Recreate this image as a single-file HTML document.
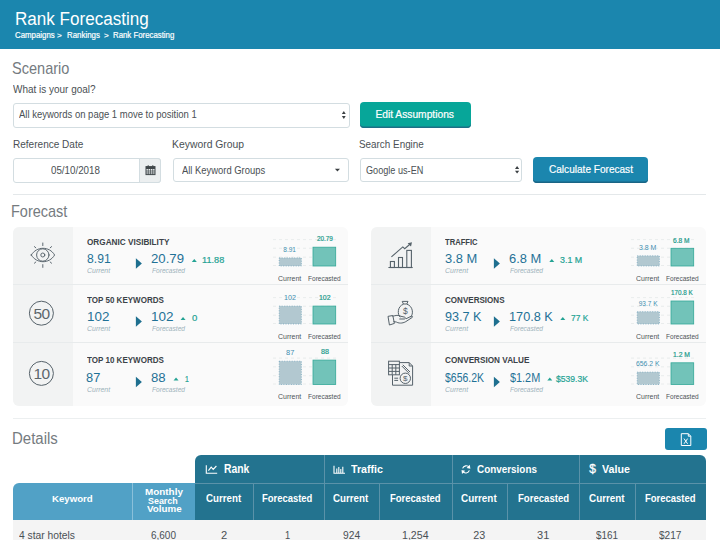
<!DOCTYPE html>
<html><head><meta charset="utf-8"><style>
html,body{margin:0;padding:0;background:#fff;width:720px;height:540px;overflow:hidden;position:relative}
body>div{position:absolute}
.t{position:absolute;font-family:"Liberation Sans",sans-serif;line-height:1;white-space:pre;transform-origin:0 0}
</style></head><body>
<div style="left:0px;top:0px;width:720.00px;height:49.00px;background:#1b86ae"></div><div style="left:13px;top:103px;width:336.50px;height:24.50px;border:1px solid #d3dde1;border-radius:3px;background:#fff;box-sizing:border-box"></div><div style="left:360px;top:102.3px;width:110.75px;height:25.30px;background:#07a699;border-radius:4px;box-shadow:inset 0 -1.5px 0 #1d6f86"></div><div style="left:13px;top:158px;width:148.00px;height:24.50px;border:1px solid #d3dde1;border-radius:3px;background:#fff;box-sizing:border-box"></div><div style="left:139px;top:158px;width:22.00px;height:24.50px;border:1px solid #d3dde1;border-radius:0 3px 3px 0;background:#eceff0;box-sizing:border-box"></div><div style="left:172.5px;top:158px;width:176.50px;height:24.00px;border:1px solid #d3dde1;border-radius:3px;background:#fff;box-sizing:border-box"></div><div style="left:359.5px;top:158px;width:162.50px;height:24.00px;border:1px solid #d3dde1;border-radius:3px;background:#fff;box-sizing:border-box"></div><div style="left:533px;top:157px;width:114.80px;height:25.60px;background:#1b86ae;border-radius:4px;box-shadow:inset 0 -1.5px 0 #1a6585"></div><div style="left:13px;top:194px;width:693.00px;height:1.00px;background:#e4e8ea"></div><div style="left:13px;top:417.5px;width:693.00px;height:1.00px;background:#eceff0"></div><div style="left:13px;top:227px;width:335.00px;height:178.70px;background:#fafafa;border-radius:6px"></div><div style="left:13px;top:227px;width:60.00px;height:178.70px;background:#f2f3f3;border-radius:6px 0 0 6px"></div><div style="left:13px;top:284px;width:335.00px;height:1.00px;background:#e8ebec"></div><div style="left:13px;top:342px;width:335.00px;height:1.00px;background:#e8ebec"></div><div style="left:370.7px;top:227px;width:335.00px;height:178.70px;background:#fafafa;border-radius:6px"></div><div style="left:370.7px;top:227px;width:60.00px;height:178.70px;background:#f2f3f3;border-radius:6px 0 0 6px"></div><div style="left:370.7px;top:284px;width:335.00px;height:1.00px;background:#e8ebec"></div><div style="left:370.7px;top:342px;width:335.00px;height:1.00px;background:#e8ebec"></div><div style="left:665px;top:428px;width:42.00px;height:22.30px;background:#1b86ae;border-radius:3px"></div><div style="left:195px;top:455px;width:511.30px;height:65.00px;background:#23738f;border-radius:6px 6px 0 0"></div><div style="left:13px;top:483px;width:182.00px;height:37.00px;background:#51a1c6;border-radius:6px 0 0 0"></div><div style="left:195px;top:483px;width:511.30px;height:1.00px;background:#5a92a9"></div><div style="left:252.8px;top:483px;width:1.00px;height:37.00px;background:#5a92a9"></div><div style="left:323.6px;top:455px;width:1.00px;height:65.00px;background:#5a92a9"></div><div style="left:379.4px;top:483px;width:1.00px;height:37.00px;background:#5a92a9"></div><div style="left:451.7px;top:455px;width:1.00px;height:65.00px;background:#5a92a9"></div><div style="left:507.3px;top:483px;width:1.00px;height:37.00px;background:#5a92a9"></div><div style="left:578.5px;top:455px;width:1.00px;height:65.00px;background:#5a92a9"></div><div style="left:635.3px;top:483px;width:1.00px;height:37.00px;background:#5a92a9"></div><div style="left:132.2px;top:483px;width:1.00px;height:37.00px;background:#8ac0da"></div><div style="left:13px;top:520px;width:693.30px;height:20.00px;background:#f4f4f4"></div>
<svg width="720" height="540" style="position:absolute;left:0;top:0"><polygon points="135.9,258.3 141.9,263.5 135.9,268.7" fill="#1e6f8f"/><polygon points="191.8,261.9 194.3,258.9 196.8,261.9" fill="#24a394"/><line x1="273" y1="239.6" x2="339" y2="239.6" stroke="#e5e8e9" stroke-width="0.8" stroke-dasharray="3,3"/><line x1="273" y1="248.3" x2="339" y2="248.3" stroke="#e5e8e9" stroke-width="0.8" stroke-dasharray="3,3"/><line x1="273" y1="257.2" x2="339" y2="257.2" stroke="#e5e8e9" stroke-width="0.8" stroke-dasharray="3,3"/><line x1="273" y1="265.5" x2="339" y2="265.5" stroke="#e5e8e9" stroke-width="0.8" stroke-dasharray="3,3"/><rect x="279.2" y="257.9" width="22.2" height="8.100000000000023" fill="#b2c8d0" stroke="#6ea2ba" stroke-width="0.7" stroke-dasharray="1,1.5"/><rect x="313" y="247.2" width="22.7" height="18.80000000000001" fill="#72c3b9" stroke="#34a898" stroke-width="0.8"/><polygon points="135.9,316.3 141.9,321.5 135.9,326.7" fill="#1e6f8f"/><polygon points="180.55,319.9 183.05,316.9 185.55,319.9" fill="#24a394"/><line x1="273" y1="297.6" x2="339" y2="297.6" stroke="#e5e8e9" stroke-width="0.8" stroke-dasharray="3,3"/><line x1="273" y1="306.3" x2="339" y2="306.3" stroke="#e5e8e9" stroke-width="0.8" stroke-dasharray="3,3"/><line x1="273" y1="315.2" x2="339" y2="315.2" stroke="#e5e8e9" stroke-width="0.8" stroke-dasharray="3,3"/><line x1="273" y1="323.5" x2="339" y2="323.5" stroke="#e5e8e9" stroke-width="0.8" stroke-dasharray="3,3"/><rect x="279.2" y="306.1" width="22.2" height="17.899999999999977" fill="#b2c8d0" stroke="#6ea2ba" stroke-width="0.7" stroke-dasharray="1,1.5"/><rect x="313" y="306.1" width="22.7" height="17.899999999999977" fill="#72c3b9" stroke="#34a898" stroke-width="0.8"/><polygon points="135.9,376.8 141.9,382.0 135.9,387.2" fill="#1e6f8f"/><polygon points="173.55,380.4 176.05,377.4 178.55,380.4" fill="#24a394"/><line x1="273" y1="358.1" x2="339" y2="358.1" stroke="#e5e8e9" stroke-width="0.8" stroke-dasharray="3,3"/><line x1="273" y1="366.8" x2="339" y2="366.8" stroke="#e5e8e9" stroke-width="0.8" stroke-dasharray="3,3"/><line x1="273" y1="375.7" x2="339" y2="375.7" stroke="#e5e8e9" stroke-width="0.8" stroke-dasharray="3,3"/><line x1="273" y1="384.0" x2="339" y2="384.0" stroke="#e5e8e9" stroke-width="0.8" stroke-dasharray="3,3"/><rect x="279.2" y="361.2" width="22.2" height="23.30000000000001" fill="#b2c8d0" stroke="#6ea2ba" stroke-width="0.7" stroke-dasharray="1,1.5"/><rect x="313" y="360.1" width="22.7" height="24.399999999999977" fill="#72c3b9" stroke="#34a898" stroke-width="0.8"/><polygon points="493.9,258.3 499.9,263.5 493.9,268.7" fill="#1e6f8f"/><polygon points="549.3,261.9 551.8,258.9 554.3,261.9" fill="#24a394"/><line x1="631" y1="239.6" x2="697" y2="239.6" stroke="#e5e8e9" stroke-width="0.8" stroke-dasharray="3,3"/><line x1="631" y1="248.3" x2="697" y2="248.3" stroke="#e5e8e9" stroke-width="0.8" stroke-dasharray="3,3"/><line x1="631" y1="257.2" x2="697" y2="257.2" stroke="#e5e8e9" stroke-width="0.8" stroke-dasharray="3,3"/><line x1="631" y1="265.5" x2="697" y2="265.5" stroke="#e5e8e9" stroke-width="0.8" stroke-dasharray="3,3"/><rect x="637.2" y="255.8" width="22.2" height="10.199999999999989" fill="#b2c8d0" stroke="#6ea2ba" stroke-width="0.7" stroke-dasharray="1,1.5"/><rect x="671" y="248.3" width="22.7" height="17.69999999999999" fill="#72c3b9" stroke="#34a898" stroke-width="0.8"/><polygon points="493.9,316.3 499.9,321.5 493.9,326.7" fill="#1e6f8f"/><polygon points="560.3,319.9 562.8,316.9 565.3,319.9" fill="#24a394"/><line x1="631" y1="297.6" x2="697" y2="297.6" stroke="#e5e8e9" stroke-width="0.8" stroke-dasharray="3,3"/><line x1="631" y1="306.3" x2="697" y2="306.3" stroke="#e5e8e9" stroke-width="0.8" stroke-dasharray="3,3"/><line x1="631" y1="315.2" x2="697" y2="315.2" stroke="#e5e8e9" stroke-width="0.8" stroke-dasharray="3,3"/><line x1="631" y1="323.5" x2="697" y2="323.5" stroke="#e5e8e9" stroke-width="0.8" stroke-dasharray="3,3"/><rect x="637.2" y="311.7" width="22.2" height="12.300000000000011" fill="#b2c8d0" stroke="#6ea2ba" stroke-width="0.7" stroke-dasharray="1,1.5"/><rect x="671" y="301" width="22.7" height="23" fill="#72c3b9" stroke="#34a898" stroke-width="0.8"/><polygon points="493.9,376.8 499.9,382.0 493.9,387.2" fill="#1e6f8f"/><polygon points="547.3,380.4 549.8,377.4 552.3,380.4" fill="#24a394"/><line x1="631" y1="358.1" x2="697" y2="358.1" stroke="#e5e8e9" stroke-width="0.8" stroke-dasharray="3,3"/><line x1="631" y1="366.8" x2="697" y2="366.8" stroke="#e5e8e9" stroke-width="0.8" stroke-dasharray="3,3"/><line x1="631" y1="375.7" x2="697" y2="375.7" stroke="#e5e8e9" stroke-width="0.8" stroke-dasharray="3,3"/><line x1="631" y1="384.0" x2="697" y2="384.0" stroke="#e5e8e9" stroke-width="0.8" stroke-dasharray="3,3"/><rect x="637.2" y="372.1" width="22.2" height="12.399999999999977" fill="#b2c8d0" stroke="#6ea2ba" stroke-width="0.7" stroke-dasharray="1,1.5"/><rect x="671" y="362.8" width="22.7" height="21.69999999999999" fill="#72c3b9" stroke="#34a898" stroke-width="0.8"/><polygon points="341.9,113.9 343.8,111 345.7,113.9" fill="#3a3f42"/><polygon points="341.9,116.1 343.8,118.9 345.7,116.1" fill="#3a3f42"/><polygon points="515,168.9 517.1,166.1 519.2,168.9" fill="#3a3f42"/><polygon points="515,170.8 517.1,173.6 519.2,170.8" fill="#3a3f42"/><polygon points="334.9,168.75 340,168.75 337.45,171.5" fill="#3a3f42"/><rect x="146" y="166.6" width="9" height="8" fill="none" stroke="#41474a" stroke-width="1"/><rect x="146" y="166.6" width="9" height="2.4" fill="#41474a"/><path d="M148.2,165.2v2 M152.8,165.2v2" stroke="#41474a" stroke-width="1"/><path d="M146,171h9 M146,173h9 M148.3,169v6 M150.5,169v6 M152.7,169v6" stroke="#41474a" stroke-width="0.7"/><g fill="none" stroke="#56626a" stroke-width="0.95" stroke-linecap="round"><path d="M31.3,255 C36.5,246 49.4,246 54.6,255 C49.4,264 36.5,264 31.3,255 Z"/><circle cx="42.8" cy="255" r="6.2"/><circle cx="42.8" cy="255" r="2"/><path d="M42.8,243v2.6 M42.8,264.6v2.8 M34.4,246.6l1.4,1.2 M51.6,246.6l-1.4,1.2 M34.4,263.2l1.4,-1.2 M51.6,263.2l-1.4,-1.2"/></g><circle cx="41.4" cy="313.2" r="12" fill="none" stroke="#56626a" stroke-width="1"/><text x="41.4" y="318.5" text-anchor="middle" font-family="Liberation Sans" font-size="15.5" fill="#5c666b" letter-spacing="-0.6">50</text><circle cx="41.4" cy="373.4" r="12" fill="none" stroke="#56626a" stroke-width="1"/><text x="41.4" y="378.7" text-anchor="middle" font-family="Liberation Sans" font-size="15.5" fill="#5c666b" letter-spacing="-0.6">10</text><g fill="none" stroke="#56626a" stroke-width="1.1"><path d="M388.4,267.5H412.7"/><rect x="390.4" y="261.5" width="4" height="6"/><rect x="398.5" y="257.5" width="4" height="10"/><rect x="406.8" y="250.4" width="4.6" height="17.1"/><path d="M391.4,256.9L402.8,246.9L404.7,248.7L410.2,244"/></g><polygon points="407.6,243.2 412,242.2 411,246.4" fill="#56626a"/><g fill="none" stroke="#56626a" stroke-width="1" stroke-linejoin="round" stroke-linecap="round"><path d="M402.6,301.4h5.4l-1.2,2.6h-3z"/><path d="M403.2,304.3C397.5,306 397,314.5 400,317 M407.2,304.3C413,306 413.8,314 410.8,317"/><path d="M388.4,316.3l4.4,-0.8l1.6,7.9l-4.6,1.5z"/><path d="M392.8,316.2C396,315.5 398,314.6 401,316.3l3.8,0.9c1,0.4 0.8,1.8 -0.3,1.8h-4.8"/><path d="M393.9,321.6l2.6,0.5C400,324 404,322.8 406,321.5l6.3,-4.1c0.6,-0.6 0,-1.6 -0.9,-1.3l-5,2.5"/></g><text x="405.3" y="314" text-anchor="middle" font-family="Liberation Sans" font-size="8.5" fill="#56626a">$</text><g fill="none" stroke="#56626a" stroke-width="1"><path d="M399.6,362.6H409.2L412.6,366V385.2H392.5V375"/><path d="M409.2,362.6V366H412.6"/><rect x="388.6" y="361.2" width="10.8" height="13.6"/><path d="M388.6,364.6h10.8 M392.2,364.6v10.2 M395.8,364.6v10.2 M388.6,368h10.8 M388.6,371.4h10.8"/><circle cx="405.3" cy="378.3" r="5.2"/><path d="M402.8,364.8l7.2,7.2 M401.8,366l7.4,7.4"/><path d="M394.3,378.2h3.8 M394.3,380.4h3.8"/></g><text x="405.3" y="381.2" text-anchor="middle" font-family="Liberation Sans" font-size="8" fill="#56626a">$</text><g fill="none" stroke="#ffffff" stroke-width="1.1"><path d="M206.3,465.2V473.2H217.2"/><path d="M208.4,470.6L211.2,467.2L213.2,469.4L216.4,466"/><path d="M334,465.8V473.2H345"/><path d="M336.8,473v-4.5 M338.8,473v-6 M340.8,473v-4 M342.8,473v-6.2"/><path d="M462.6,468.4A3.9,3.9 0 0 1 469.3,467.2 M469.4,470.4A3.9,3.9 0 0 1 462.6,471.4"/></g><polygon points="469.8,464.8 470.4,468.8 466.6,468" fill="#fff"/><polygon points="462.0,474 461.5,470 465.2,470.8" fill="#fff"/><text x="592.5" y="473.2" text-anchor="middle" font-family="Liberation Sans" font-size="12" fill="#fff" stroke="#fff" stroke-width="0.3">$</text><g fill="none" stroke="#ffffff" stroke-width="1"><path d="M681.3,433.7H688.3L690.8,436.2V445.5H681.3Z"/><path d="M688.3,433.7V436.2H690.8"/><path d="M684,438.6l3.6,5.2 M687.6,438.6l-3.6,5.2"/></g></svg>
<div class="t" style="left:14.71px;top:10.00px;font-size:18.0px;color:#ffffff;transform:scaleX(0.948)">Rank Forecasting</div>
<div class="t" style="left:14.70px;top:31.00px;font-size:8.75px;color:#ffffff;-webkit-text-stroke:0.2px currentColor;transform:scaleX(0.896)">Campaigns</div>
<div class="t" style="left:57.22px;top:32.00px;font-size:8.0px;color:#ffffff;-webkit-text-stroke:0.2px currentColor;transform:scaleX(1.030)">&gt;</div>
<div class="t" style="left:67.28px;top:31.00px;font-size:8.75px;color:#ffffff;-webkit-text-stroke:0.2px currentColor;transform:scaleX(0.900)">Rankings</div>
<div class="t" style="left:103.83px;top:32.00px;font-size:8.0px;color:#ffffff;-webkit-text-stroke:0.2px currentColor;transform:scaleX(1.023)">&gt;</div>
<div class="t" style="left:113.27px;top:31.00px;font-size:8.75px;color:#ffffff;-webkit-text-stroke:0.2px currentColor;transform:scaleX(0.894)">Rank Forecasting</div>
<div class="t" style="left:11.76px;top:60.00px;font-size:17.0px;color:#757b7f;transform:scaleX(0.855)">Scenario</div>
<div class="t" style="left:12.98px;top:84.00px;font-size:10.5px;color:#4a5054;transform:scaleX(0.950)">What is your goal?</div>
<div class="t" style="left:18.94px;top:110.00px;font-size:10.25px;color:#4a5054;transform:scaleX(0.926)">All keywords on page 1 move to position 1</div>
<div class="t" style="left:375.39px;top:110.00px;font-size:10.25px;color:#ffffff;-webkit-text-stroke:0.2px currentColor">Edit Assumptions</div>
<div class="t" style="left:12.70px;top:139.00px;font-size:10.75px;color:#4a5054;transform:scaleX(0.934)">Reference Date</div>
<div class="t" style="left:171.64px;top:139.00px;font-size:10.75px;color:#4a5054;transform:scaleX(0.966)">Keyword Group</div>
<div class="t" style="left:358.93px;top:139.00px;font-size:10.75px;color:#4a5054;transform:scaleX(0.919)">Search Engine</div>
<div class="t" style="left:51.48px;top:165.00px;font-size:10.75px;color:#4a5054;transform:scaleX(0.909)">05/10/2018</div>
<div class="t" style="left:181.73px;top:166.00px;font-size:10.0px;color:#4a5054;transform:scaleX(0.941)">All Keyword Groups</div>
<div class="t" style="left:365.99px;top:165.00px;font-size:11.25px;color:#4a5054;transform:scaleX(0.811)">Google us-EN</div>
<div class="t" style="left:548.52px;top:164.00px;font-size:11.25px;color:#ffffff;-webkit-text-stroke:0.2px currentColor;transform:scaleX(0.895)">Calculate Forecast</div>
<div class="t" style="left:11.29px;top:204.00px;font-size:15.75px;color:#757b7f;transform:scaleX(0.920)">Forecast</div>
<div class="t" style="left:12.17px;top:431.00px;font-size:16.0px;color:#757b7f;transform:scaleX(0.937)">Details</div>
<div class="t" style="left:86.62px;top:238.00px;font-size:8.75px;color:#3b4348;font-weight:700;transform:scaleX(0.936)">ORGANIC VISIBILITY</div>
<div class="t" style="left:86.52px;top:252.00px;font-size:13.25px;color:#1f7196;transform:scaleX(0.917)">8.91</div>
<div class="t" style="left:86.64px;top:267.00px;font-size:7.5px;color:#9db2bb;font-style:italic;transform:scaleX(0.926)">Current</div>
<div class="t" style="left:151.11px;top:252.00px;font-size:13.25px;color:#1f7196;transform:scaleX(0.994)">20.79</div>
<div class="t" style="left:151.60px;top:267.00px;font-size:7.5px;color:#9db2bb;font-style:italic;transform:scaleX(0.879)">Forecasted</div>
<div class="t" style="left:201.78px;top:256.00px;font-size:9.0px;color:#24a394;-webkit-text-stroke:0.2px currentColor;transform:scaleX(1.020)">11.88</div>
<div class="t" style="left:283.30px;top:247.00px;font-size:6.5px;color:#3f8fb0">8.91</div>
<div class="t" style="left:316.69px;top:236.00px;font-size:6.5px;color:#1e9b8c;-webkit-text-stroke:0.2px currentColor;transform:scaleX(0.978)">20.79</div>
<div class="t" style="left:278.45px;top:275.00px;font-size:7.0px;color:#4e5559;transform:scaleX(0.995)">Current</div>
<div class="t" style="left:307.54px;top:275.00px;font-size:7.0px;color:#4e5559;transform:scaleX(0.934)">Forecasted</div>
<div class="t" style="left:87.44px;top:296.00px;font-size:8.75px;color:#3b4348;font-weight:700;transform:scaleX(0.917)">TOP 50 KEYWORDS</div>
<div class="t" style="left:86.94px;top:310.00px;font-size:13.25px;color:#1f7196;transform:scaleX(1.011)">102</div>
<div class="t" style="left:86.64px;top:325.00px;font-size:7.5px;color:#9db2bb;font-style:italic;transform:scaleX(0.926)">Current</div>
<div class="t" style="left:150.75px;top:310.00px;font-size:13.25px;color:#1f7196;transform:scaleX(1.018)">102</div>
<div class="t" style="left:151.60px;top:325.00px;font-size:7.5px;color:#9db2bb;font-style:italic;transform:scaleX(0.879)">Forecasted</div>
<div class="t" style="left:191.73px;top:314.00px;font-size:9.0px;color:#24a394;-webkit-text-stroke:0.2px currentColor;transform:scaleX(1.058)">0</div>
<div class="t" style="left:284.16px;top:295.00px;font-size:6.5px;color:#3f8fb0;transform:scaleX(1.104)">102</div>
<div class="t" style="left:318.64px;top:295.00px;font-size:6.5px;color:#1e9b8c;-webkit-text-stroke:0.2px currentColor;transform:scaleX(1.061)">102</div>
<div class="t" style="left:278.45px;top:333.00px;font-size:7.0px;color:#4e5559;transform:scaleX(0.995)">Current</div>
<div class="t" style="left:307.54px;top:333.00px;font-size:7.0px;color:#4e5559;transform:scaleX(0.934)">Forecasted</div>
<div class="t" style="left:87.44px;top:356.00px;font-size:8.75px;color:#3b4348;font-weight:700;transform:scaleX(0.917)">TOP 10 KEYWORDS</div>
<div class="t" style="left:86.47px;top:371.00px;font-size:13.25px;color:#1f7196;transform:scaleX(0.968)">87</div>
<div class="t" style="left:86.64px;top:386.00px;font-size:7.5px;color:#9db2bb;font-style:italic;transform:scaleX(0.926)">Current</div>
<div class="t" style="left:151.24px;top:371.00px;font-size:13.25px;color:#1f7196;transform:scaleX(0.994)">88</div>
<div class="t" style="left:151.60px;top:386.00px;font-size:7.5px;color:#9db2bb;font-style:italic;transform:scaleX(0.879)">Forecasted</div>
<div class="t" style="left:184.57px;top:375.00px;font-size:9.0px;color:#24a394;-webkit-text-stroke:0.2px currentColor;transform:scaleX(0.770)">1</div>
<div class="t" style="left:286.04px;top:350.00px;font-size:6.5px;color:#3f8fb0;transform:scaleX(1.146)">87</div>
<div class="t" style="left:320.61px;top:349.00px;font-size:6.5px;color:#1e9b8c;-webkit-text-stroke:0.2px currentColor;transform:scaleX(1.101)">88</div>
<div class="t" style="left:278.45px;top:393.00px;font-size:7.0px;color:#4e5559;transform:scaleX(0.995)">Current</div>
<div class="t" style="left:307.54px;top:393.00px;font-size:7.0px;color:#4e5559;transform:scaleX(0.934)">Forecasted</div>
<div class="t" style="left:445.44px;top:238.00px;font-size:8.75px;color:#3b4348;font-weight:700;transform:scaleX(0.871)">TRAFFIC</div>
<div class="t" style="left:445.22px;top:252.00px;font-size:13.25px;color:#1f7196;transform:scaleX(0.973)">3.8 M</div>
<div class="t" style="left:444.64px;top:267.00px;font-size:7.5px;color:#9db2bb;font-style:italic;transform:scaleX(0.926)">Current</div>
<div class="t" style="left:509.15px;top:252.00px;font-size:13.25px;color:#1f7196;transform:scaleX(0.973)">6.8 M</div>
<div class="t" style="left:509.60px;top:267.00px;font-size:7.5px;color:#9db2bb;font-style:italic;transform:scaleX(0.879)">Forecasted</div>
<div class="t" style="left:559.72px;top:256.00px;font-size:9.0px;color:#24a394;-webkit-text-stroke:0.2px currentColor;transform:scaleX(0.985)">3.1 M</div>
<div class="t" style="left:638.79px;top:245.00px;font-size:6.5px;color:#3f8fb0;transform:scaleX(1.072)">3.8 M</div>
<div class="t" style="left:673.40px;top:238.00px;font-size:6.5px;color:#1e9b8c;-webkit-text-stroke:0.2px currentColor;transform:scaleX(1.015)">6.8 M</div>
<div class="t" style="left:636.45px;top:275.00px;font-size:7.0px;color:#4e5559;transform:scaleX(0.995)">Current</div>
<div class="t" style="left:665.54px;top:275.00px;font-size:7.0px;color:#4e5559;transform:scaleX(0.934)">Forecasted</div>
<div class="t" style="left:444.64px;top:296.00px;font-size:8.75px;color:#3b4348;font-weight:700;transform:scaleX(0.921)">CONVERSIONS</div>
<div class="t" style="left:445.34px;top:310.00px;font-size:13.25px;color:#1f7196;transform:scaleX(0.954)">93.7 K</div>
<div class="t" style="left:444.64px;top:325.00px;font-size:7.5px;color:#9db2bb;font-style:italic;transform:scaleX(0.926)">Current</div>
<div class="t" style="left:508.89px;top:310.00px;font-size:13.25px;color:#1f7196;transform:scaleX(0.959)">170.8 K</div>
<div class="t" style="left:509.60px;top:325.00px;font-size:7.5px;color:#9db2bb;font-style:italic;transform:scaleX(0.879)">Forecasted</div>
<div class="t" style="left:570.53px;top:314.00px;font-size:9.0px;color:#24a394;-webkit-text-stroke:0.2px currentColor;transform:scaleX(0.933)">77 K</div>
<div class="t" style="left:638.69px;top:301.00px;font-size:6.5px;color:#3f8fb0">93.7 K</div>
<div class="t" style="left:670.93px;top:290.00px;font-size:6.5px;color:#1e9b8c;-webkit-text-stroke:0.2px currentColor;transform:scaleX(0.969)">170.8 K</div>
<div class="t" style="left:636.45px;top:333.00px;font-size:7.0px;color:#4e5559;transform:scaleX(0.995)">Current</div>
<div class="t" style="left:665.54px;top:333.00px;font-size:7.0px;color:#4e5559;transform:scaleX(0.934)">Forecasted</div>
<div class="t" style="left:444.64px;top:356.00px;font-size:8.75px;color:#3b4348;font-weight:700;transform:scaleX(0.935)">CONVERSION VALUE</div>
<div class="t" style="left:445.13px;top:371.00px;font-size:13.25px;color:#1f7196;transform:scaleX(0.790)">$656.2K</div>
<div class="t" style="left:444.64px;top:386.00px;font-size:7.5px;color:#9db2bb;font-style:italic;transform:scaleX(0.926)">Current</div>
<div class="t" style="left:509.92px;top:371.00px;font-size:13.25px;color:#1f7196;transform:scaleX(0.821)">$1.2M</div>
<div class="t" style="left:509.60px;top:386.00px;font-size:7.5px;color:#9db2bb;font-style:italic;transform:scaleX(0.879)">Forecasted</div>
<div class="t" style="left:555.81px;top:375.00px;font-size:9.0px;color:#24a394;-webkit-text-stroke:0.2px currentColor;transform:scaleX(0.955)">$539.3K</div>
<div class="t" style="left:636.25px;top:361.00px;font-size:6.5px;color:#3f8fb0;transform:scaleX(1.049)">656.2 K</div>
<div class="t" style="left:673.08px;top:352.00px;font-size:6.5px;color:#1e9b8c;-webkit-text-stroke:0.2px currentColor;transform:scaleX(1.044)">1.2 M</div>
<div class="t" style="left:636.45px;top:393.00px;font-size:7.0px;color:#4e5559;transform:scaleX(0.995)">Current</div>
<div class="t" style="left:665.54px;top:393.00px;font-size:7.0px;color:#4e5559;transform:scaleX(0.934)">Forecasted</div>
<div class="t" style="left:223.64px;top:463.00px;font-size:12.0px;color:#ffffff;font-weight:700;transform:scaleX(0.865)">Rank</div>
<div class="t" style="left:351.36px;top:464.00px;font-size:11.25px;color:#ffffff;font-weight:700;transform:scaleX(0.948)">Traffic</div>
<div class="t" style="left:476.57px;top:464.00px;font-size:11.25px;color:#ffffff;font-weight:700;transform:scaleX(0.880)">Conversions</div>
<div class="t" style="left:601.85px;top:464.00px;font-size:11.25px;color:#ffffff;font-weight:700;transform:scaleX(0.948)">Value</div>
<div class="t" style="left:52.19px;top:494.00px;font-size:9.75px;color:#ffffff;font-weight:700;transform:scaleX(0.989)">Keyword</div>
<div class="t" style="left:145.37px;top:487.00px;font-size:9.5px;color:#ffffff;font-weight:700;transform:scaleX(1.041)">Monthly</div>
<div class="t" style="left:147.60px;top:496.00px;font-size:9.5px;color:#ffffff;font-weight:700;transform:scaleX(0.938)">Search</div>
<div class="t" style="left:146.56px;top:504.00px;font-size:9.5px;color:#ffffff;font-weight:700;transform:scaleX(1.030)">Volume</div>
<div class="t" style="left:206.20px;top:493.00px;font-size:11.0px;color:#ffffff;font-weight:700;transform:scaleX(0.885)">Current</div>
<div class="t" style="left:333.40px;top:493.00px;font-size:11.0px;color:#ffffff;font-weight:700;transform:scaleX(0.886)">Current</div>
<div class="t" style="left:461.38px;top:493.00px;font-size:11.0px;color:#ffffff;font-weight:700;transform:scaleX(0.898)">Current</div>
<div class="t" style="left:589.37px;top:493.00px;font-size:11.0px;color:#ffffff;font-weight:700;transform:scaleX(0.897)">Current</div>
<div class="t" style="left:262.24px;top:493.00px;font-size:11.0px;color:#ffffff;font-weight:700;transform:scaleX(0.858)">Forecasted</div>
<div class="t" style="left:390.02px;top:493.00px;font-size:11.0px;color:#ffffff;font-weight:700;transform:scaleX(0.863)">Forecasted</div>
<div class="t" style="left:518.41px;top:493.00px;font-size:11.0px;color:#ffffff;font-weight:700;transform:scaleX(0.871)">Forecasted</div>
<div class="t" style="left:645.42px;top:493.00px;font-size:11.0px;color:#ffffff;font-weight:700;transform:scaleX(0.862)">Forecasted</div>
<div class="t" style="left:19.02px;top:531.00px;font-size:10.0px;color:#4a5054;transform:scaleX(1.028)">4 star hotels</div>
<div class="t" style="left:151.47px;top:530.00px;font-size:10.75px;color:#4a5054;transform:scaleX(0.928)">6,600</div>
<div class="t" style="left:221.09px;top:530.00px;font-size:10.75px;color:#4a5054;transform:scaleX(1.037)">2</div>
<div class="t" style="left:285.00px;top:530.00px;font-size:10.75px;color:#4a5054;transform:scaleX(0.865)">1</div>
<div class="t" style="left:343.45px;top:530.00px;font-size:10.75px;color:#4a5054;transform:scaleX(0.955)">924</div>
<div class="t" style="left:402.20px;top:530.00px;font-size:10.75px;color:#4a5054;transform:scaleX(0.986)">1,254</div>
<div class="t" style="left:473.21px;top:530.00px;font-size:10.75px;color:#4a5054">23</div>
<div class="t" style="left:536.85px;top:530.00px;font-size:10.75px;color:#4a5054;transform:scaleX(1.029)">31</div>
<div class="t" style="left:596.47px;top:530.00px;font-size:10.75px;color:#4a5054;transform:scaleX(0.921)">$161</div>
<div class="t" style="left:659.27px;top:530.00px;font-size:10.75px;color:#4a5054;transform:scaleX(0.940)">$217</div>
</body></html>
